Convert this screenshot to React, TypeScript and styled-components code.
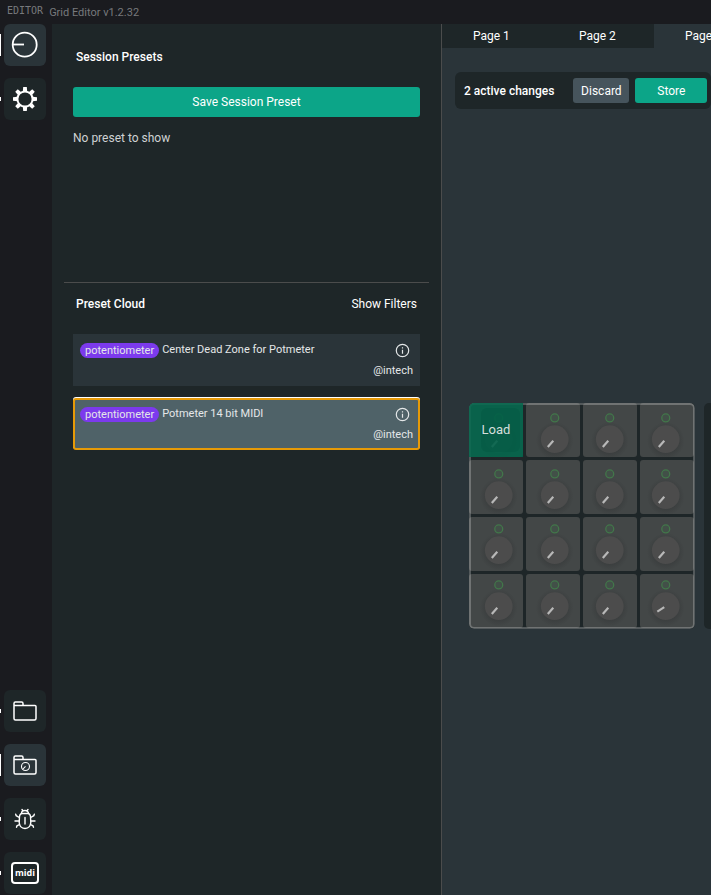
import React from "react";
import styled, { createGlobalStyle, css } from "styled-components";

const color = {
  frame: "#1a1b1f",
  panel: "#1e2628",
  surface: "#2a3439",
  line: "#4b4c4c",
  accent: "#0ca588",
  muted: "#46545c",
  tag: "#7c3aed",
  focus: "#e69a07",
};

const GlobalStyle = createGlobalStyle`
  * { box-sizing: border-box; }
  body {
    margin: 0;
    background: ${color.frame};
    color: #fff;
    font: 400 12px/16px Roboto, "Liberation Sans", sans-serif;
    overflow: hidden;
  }
  button { font: inherit; color: inherit; border: 0; padding: 0; cursor: pointer; }
  h2, p, ul { margin: 0; padding: 0; }
  ul { list-style: none; }
`;

const Shell = styled.div`
  display: grid;
  grid-template-rows: 24px minmax(0, 1fr);
  height: 100vh;
`;

const TitleBar = styled.header`
  display: flex;
  align-items: center;
  gap: 6px;
  padding: 1px 0 0 7px;
  color: #77797c;
  font-size: 11px;
`;

const Brand = styled.span`
  padding-bottom: 3px;
  font: 10px/16px "DejaVu Sans Mono", monospace;
`;

const Main = styled.div`
  display: grid;
  grid-template-columns: 52px minmax(0, 390fr) minmax(0, 269fr);
  min-height: 0;
`;

const Rail = styled.nav`
  display: flex;
  flex-direction: column;
  justify-content: space-between;
  padding-bottom: 1px;
`;

const RailGroup = styled.div`
  display: flex;
  flex-direction: column;
  gap: 12px;
`;

const RailItem = styled.div`
  display: flex;
  align-items: center;
  gap: 3px;
`;

const RailMark = styled.span<{ $active?: boolean }>`
  width: 1px;
  height: ${(p) => (p.$active ? 22 : 4)}px;
  background: #fff;
`;

const RailButton = styled.button<{ $active?: boolean }>`
  display: grid;
  place-items: center;
  width: 42px;
  height: 42px;
  border-radius: 6px;
  background: ${(p) => (p.$active ? color.surface : color.panel)};
`;

const Panel = styled.aside`
  display: grid;
  grid-template-rows: minmax(0, 258fr) minmax(0, 613fr);
  padding: 0 12px;
  background: ${color.panel};
  border-right: 1px solid ${color.line};
`;

const Section = styled.section<{ $divided?: boolean }>`
  display: flex;
  flex-direction: column;
  gap: 22px;
  padding: ${(p) => (p.$divided ? "13px 9px" : "25px 9px")};
  ${(p) =>
    p.$divided &&
    css`
      border-top: 1px solid ${color.line};
    `}
`;

const SectionHead = styled.div`
  display: flex;
  justify-content: space-between;
  padding: 0 3px;
`;

const SectionTitle = styled.h2`
  font-size: 12px;
  font-weight: 500;
`;

const FilterButton = styled.button`
  background: none;
`;

const SessionBody = styled.div`
  display: flex;
  flex-direction: column;
  gap: 13px;
  color: #cfd2d3;
`;

const ActionButton = styled.button<{ $tone?: "muted"; $size?: "wide" | "small" | "medium" }>`
  flex: none;
  height: ${(p) => (p.$size === "wide" ? 30 : 25)}px;
  width: ${(p) => (p.$size === "wide" ? "100%" : p.$size === "small" ? "56px" : "72px")};
  border-radius: 3px;
  background: ${(p) => (p.$tone === "muted" ? color.muted : color.accent)};
  color: #fff;
`;

const PresetList = styled.ul`
  display: flex;
  flex-direction: column;
  gap: 12px;
`;

const Preset = styled.li<{ $selected?: boolean }>`
  display: flex;
  flex-direction: column;
  gap: 5px;
  padding: 8px 7px 7px;
  background: ${color.surface};
  color: #e4e7e8;
  font-size: 11px;
  ${(p) =>
    p.$selected &&
    css`
      padding: 6px 5px 5px;
      border: 2px solid ${color.focus};
      border-radius: 3px;
      background: #4f6268;
      box-shadow: 0 -1px 0 #fff;
    `}
`;

const PresetRow = styled.div`
  display: flex;
  align-items: center;
  gap: 3px;
`;

const Tag = styled.span`
  padding: 0 5px;
  border-radius: 8px;
  background: ${color.tag};
  line-height: 15px;
`;

const PresetName = styled.span`
  flex: 1;
`;

const InfoButton = styled.button`
  display: grid;
  margin-right: 3px;
  background: none;
`;

const Author = styled.p`
  text-align: right;
`;

const Workspace = styled.main`
  display: flex;
  flex-direction: column;
  overflow: hidden;
  background: ${color.surface};
`;

const Tabs = styled.div`
  display: flex;
  height: 24px;
`;

const Tab = styled.button<{ $active?: boolean }>`
  flex: 0 0 106px;
  padding-left: 31px;
  text-align: left;
  background: ${(p) => (p.$active ? color.surface : color.panel)};
`;

const ChangeBar = styled.div`
  display: flex;
  align-items: center;
  align-self: flex-start;
  gap: 6px;
  margin: 24px 0 0 13px;
  padding: 6px 9px;
  border-radius: 6px;
  background: ${color.panel};
`;

const ChangeCount = styled.p`
  flex: none;
  padding-right: 13px;
  font-weight: 500;
`;

const Canvas = styled.div`
  display: flex;
  flex: 1;
  align-items: center;
  gap: 9px;
  padding: 28px 0 0 27px;
`;

const Module = styled.div`
  position: relative;
  flex: none;
  width: 226px;
  aspect-ratio: 1;
  padding: 0 1px 1px 0;
  border-radius: 5px;
  background: ${color.panel};
  overflow: hidden;
`;

const Cells = styled.div`
  display: grid;
  grid-template: repeat(4, 1fr) / repeat(4, 1fr);
  gap: 3px;
  height: 100%;
`;

const Cell = styled.div`
  border-radius: 3px;
  background: #434747;
`;

const Controls = styled.div`
  position: absolute;
  inset: 0;
  display: grid;
  grid-template: repeat(4, 1fr) / repeat(4, 1fr);
  border: 2px solid rgba(255, 255, 255, 0.24);
  border-radius: 5px;
`;

const KnobArt = styled.svg`
  display: block;
  width: 100%;
  height: 100%;
`;

const LoadButton = styled.button`
  position: absolute;
  top: 0;
  left: 0;
  width: 54px;
  height: 54px;
  background: rgba(0, 103, 76, 0.86);
  color: #d5dfdc;
`;

const LoadLabel = styled.span`
  display: grid;
  place-items: center;
  height: 44px;
  margin: 0 3px 0 12px;
  padding-right: 9px;
  border-radius: 6px;
  background: rgba(0, 80, 60, 0.25);
  font-size: 13px;
`;

function Knob({ angled }: { angled?: boolean }) {
  return (
    <KnobArt viewBox="0 0 56 56" aria-hidden="true">
      <defs>
        <radialGradient id="shade">
          <stop offset="0.65" stopColor="#303233" stopOpacity="0.4" />
          <stop offset="1" stopColor="#303233" stopOpacity="0" />
        </radialGradient>
      </defs>
      <circle cx="28" cy="13" r="4" fill="#41604a" fillOpacity="0.4" stroke="#42774a" strokeWidth="1.3" />
      <circle cx="28" cy="36" r="19" fill="url(#shade)" />
      <circle cx="28" cy="34.5" r="14" fill="#4c4c4c" />
      <path d={angled ? "M19.5 40 26.5 35.5" : "M21 42.3 26.5 36"} stroke="#b8b8b8" strokeWidth="2.2" />
    </KnobArt>
  );
}

const LogoIcon = () => (
  <svg width="28" height="28" viewBox="0 0 28 28" fill="none" stroke="#fff" strokeWidth="1.8">
    <circle cx="13.7" cy="13.7" r="12" />
    <path d="M2 13.5h11" />
  </svg>
);

const GearIcon = () => (
  <svg width="26" height="26" viewBox="-13 -13 26 26" fill="none" stroke="#fff">
    <circle r="7.6" strokeWidth="2" />
    {[0, 45, 90, 135, 180, 225, 270, 315].map((a) => (
      <path key={a} d="M-2.2-7.5-1.8-12H1.8L2.2-7.5Z" fill="#fff" stroke="none" transform={`rotate(${a})`} />
    ))}
  </svg>
);

const FolderIcon = ({ preset }: { preset?: boolean }) => (
  <svg width="26" height="22" viewBox="0 0 26 22" fill="none" stroke="#fff" strokeWidth="1.5">
    <path d="M2 6V3.4Q2 2 3.4 2h6.2Q11 2 11 3.4V5.4H23Q24 5.4 24 6.6V18.5Q24 20 22.5 20h-19Q2 20 2 18.5Zm0-.6h9" strokeLinejoin="round" />
    {preset && (
      <>
        <circle cx="13.5" cy="12.5" r="4" strokeWidth="1.1" />
        <path d="M11 15 13.5 12.3" strokeWidth="1.1" />
      </>
    )}
  </svg>
);

const BugIcon = () => (
  <svg width="24" height="24" viewBox="0 0 24 24" fill="none" stroke="#fff" strokeWidth="1.4" strokeLinecap="round">
    <path d="M6.500 9.500Q7 6.500 9 6.500h6q2 0 2.500 3l.3 6q-.4 5.700-5.800 6-5.400-.3-5.800-6Z" />
    <path d="M8.500 6.500a3.500 3 0 0 1 7 0M10 3.800 9 2.500M14 3.800 15 2.500M12 10.500v6.500" />
    <path d="M6.300 10.500 3.200 8.700 2.700 7.200M6 14H2M6.500 17.500 4 18.800 3.500 20.300M17.700 10.500 20.800 8.700 21.300 7.200M18 14H22M17.500 17.500 20 18.800 20.500 20.300" />
  </svg>
);

const MidiIcon = styled.span`
  display: grid;
  place-items: center;
  width: 28px;
  height: 22px;
  border: 2px solid #fff;
  border-radius: 4px;
  font: 700 9px/12px "Open Sans", sans-serif;
`;

const InfoIcon = () => (
  <svg width="15" height="15" viewBox="0 0 15 15" fill="none" stroke="#e4e7e8" strokeWidth="1.2">
    <circle cx="7.500" cy="7.500" r="6.200" />
    <path d="M7.500 6.700v4M7.500 4.200v1.300" />
  </svg>
);

function RailEntry({ label, active, children }: { label: string; active?: boolean; children: React.ReactNode }) {
  return (
    <RailItem>
      <RailMark $active={active} />
      <RailButton $active={active} aria-label={label}>
        {children}
      </RailButton>
    </RailItem>
  );
}

const presets = [
  { tag: "potentiometer", name: "Center Dead Zone for Potmeter", author: "@intech" },
  { tag: "potentiometer", name: "Potmeter 14 bit MIDI", author: "@intech", selected: true },
];

const slots = Array.from({ length: 16 }, (_, i) => i);

export default function App() {
  return (
    <>
      <GlobalStyle />
      <Shell>
        <TitleBar>
          <Brand>EDITOR</Brand>
          <span>Grid Editor v1.2.32</span>
        </TitleBar>
        <Main>
          <Rail>
            <RailGroup>
              <RailEntry label="Configuration" active><LogoIcon /></RailEntry>
              <RailEntry label="Settings"><GearIcon /></RailEntry>
            </RailGroup>
            <RailGroup>
              <RailEntry label="Profiles"><FolderIcon /></RailEntry>
              <RailEntry label="Presets" active><FolderIcon preset /></RailEntry>
              <RailEntry label="Debug"><BugIcon /></RailEntry>
              <RailEntry label="MIDI monitor"><MidiIcon>midi</MidiIcon></RailEntry>
            </RailGroup>
          </Rail>
          <Panel>
            <Section>
              <SectionHead>
                <SectionTitle>Session Presets</SectionTitle>
              </SectionHead>
              <SessionBody>
                <ActionButton $size="wide">Save Session Preset</ActionButton>
                <p>No preset to show</p>
              </SessionBody>
            </Section>
            <Section $divided>
              <SectionHead>
                <SectionTitle>Preset Cloud</SectionTitle>
                <FilterButton>Show Filters</FilterButton>
              </SectionHead>
              <PresetList>
                {presets.map((p) => (
                  <Preset key={p.name} $selected={p.selected}>
                    <PresetRow>
                      <Tag>{p.tag}</Tag>
                      <PresetName>{p.name}</PresetName>
                      <InfoButton aria-label={`About ${p.name}`}><InfoIcon /></InfoButton>
                    </PresetRow>
                    <Author>{p.author}</Author>
                  </Preset>
                ))}
              </PresetList>
            </Section>
          </Panel>
          <Workspace>
            <Tabs>
              <Tab>Page 1</Tab>
              <Tab>Page 2</Tab>
              <Tab $active>Page 3</Tab>
            </Tabs>
            <ChangeBar>
              <ChangeCount>2 active changes</ChangeCount>
              <ActionButton $tone="muted" $size="small">Discard</ActionButton>
              <ActionButton $size="medium">Store</ActionButton>
            </ChangeBar>
            <Canvas>
              <Module>
                <Cells>{slots.map((i) => <Cell key={i} />)}</Cells>
                <Controls>{slots.map((i) => <Knob key={i} angled={i === 15} />)}</Controls>
                <LoadButton><LoadLabel>Load</LoadLabel></LoadButton>
              </Module>
              <Module />
            </Canvas>
          </Workspace>
        </Main>
      </Shell>
    </>
  );
}
